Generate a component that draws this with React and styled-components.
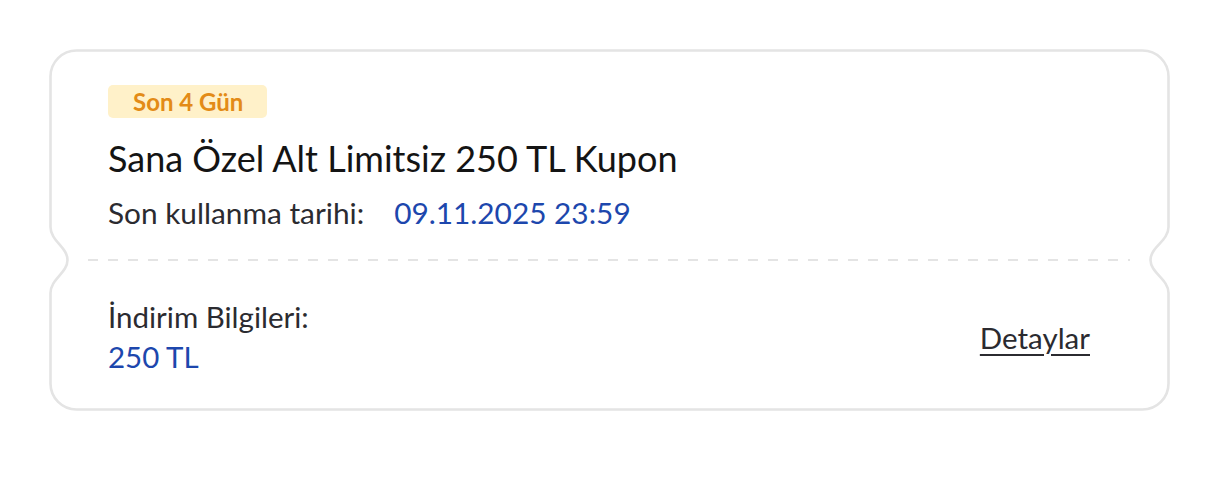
import React from 'react';
import styled, { createGlobalStyle } from 'styled-components';

const GlobalStyle = createGlobalStyle`
  body {
    margin: 0;
    background: #ffffff;
    font-family: Lato, "Noto Sans", sans-serif;
  }
`;

const Page = styled.div`
  padding: 49px 0 0 49px;
`;

const Card = styled.div`
  position: relative;
  width: 1121px;
  height: 362px;
  display: flex;
  flex-direction: column;
`;

const Outline = styled.svg`
  position: absolute;
  inset: 0;
  pointer-events: none;
`;

const Top = styled.div`
  height: 210px;
  box-sizing: border-box;
  padding: 36px 59px 0;
  display: flex;
  flex-direction: column;
  align-items: flex-start;
`;

const Badge = styled.span`
  display: inline-flex;
  align-items: center;
  height: 33px;
  padding: 0 24px 0 25px;
  border-radius: 5px;
  background: #fff1c9;
  color: #e38b17;
  font-size: 24px;
  font-weight: 700;
`;

const Title = styled.h2`
  margin: 18px 0 0;
  font-size: 36px;
  font-weight: 400;
  color: #141414;
  line-height: 44px;
`;

const Expiry = styled.div`
  margin-top: 15px;
  display: flex;
  gap: 30px;
  font-size: 29.8px;
  line-height: 36px;
`;

const Label = styled.span`
  color: #2b2b30;
`;

const Value = styled.span`
  color: #1d47ad;
`;

const Divider = styled.div`
  margin: 0 40px 0 39px;
  height: 2px;
  background: repeating-linear-gradient(to right, #e4e4e4 0 10px, transparent 10px 20px);
`;

const Bottom = styled.div`
  flex: 1;
  display: flex;
  align-items: center;
  justify-content: space-between;
  padding: 0 80px 0 59px;
`;

const Info = styled.div`
  display: flex;
  flex-direction: column;
  font-size: 29.5px;
  line-height: 40px;
  margin-top: 2px;
`;

const DetailLink = styled.a`
  color: #2b2b30;
  font-size: 29.5px;
  text-decoration: underline;
  text-underline-offset: 5px;
  text-decoration-thickness: 1.5px;
  margin-top: 2px;
  cursor: pointer;
`;

export default function App() {
  return (
    <>
      <GlobalStyle />
      <Page>
        <Card>
          <Outline width="1121" height="362" viewBox="0 0 1121 362">
            <path
              d="M 27.5 1.5 H 1093.5 A 26 26 0 0 1 1119.5 27.5 V 178 C 1119.5 192, 1101.5 198, 1101.5 211 C 1101.5 224, 1119.5 230, 1119.5 244 V 334.5 A 26 26 0 0 1 1093.5 360.5 H 27.5 A 26 26 0 0 1 1.5 334.5 V 244 C 1.5 230, 18.5 224, 18.5 211 C 18.5 198, 1.5 192, 1.5 178 V 27.5 A 26 26 0 0 1 27.5 1.5 Z"
              fill="none"
              stroke="#e4e4e4"
              strokeWidth="2.6"
            />
          </Outline>
          <Top>
            <Badge>Son 4 Gün</Badge>
            <Title>Sana Özel Alt Limitsiz 250 TL Kupon</Title>
            <Expiry>
              <Label>Son kullanma tarihi:</Label>
              <Value>09.11.2025 23:59</Value>
            </Expiry>
          </Top>
          <Divider />
          <Bottom>
            <Info>
              <Label>İndirim Bilgileri:</Label>
              <Value>250 TL</Value>
            </Info>
            <DetailLink>Detaylar</DetailLink>
          </Bottom>
        </Card>
      </Page>
    </>
  );
}
